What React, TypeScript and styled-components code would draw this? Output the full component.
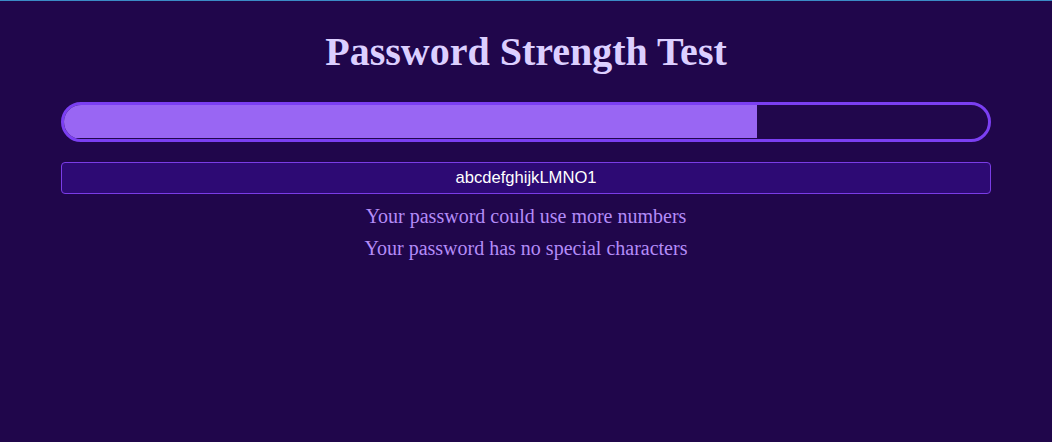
import React from "react";
import styled, { createGlobalStyle } from "styled-components";

const Global = createGlobalStyle`
  html, body { margin: 0; padding: 0; background: #20064b; }
  body { font-family: "Liberation Serif", "Times New Roman", serif; }
`;

const Page = styled.div`
  min-height: 442px;
  box-sizing: border-box;
  border-top: 1px solid #3b8bc6;
  background: #20064b;
  padding: 0 61px;
  display: flex;
  flex-direction: column;
  align-items: stretch;
`;

const Title = styled.h1`
  margin: 28px 0 0;
  text-align: center;
  font-family: "Liberation Serif", "Times New Roman", serif;
  font-weight: bold;
  font-size: 40px;
  line-height: 46px;
  color: #dccfff;
`;

const Track = styled.div`
  margin-top: 27px;
  height: 40px;
  box-sizing: border-box;
  border: 3px solid #7b3ff2;
  border-radius: 20px;
  overflow: hidden;
  background: #21074c;
`;

const Fill = styled.div`
  height: 33px;
  background: #9966f3;
`;

const Input = styled.input`
  margin-top: 20px;
  height: 32px;
  box-sizing: border-box;
  border: 1px solid #7a3ce6;
  border-radius: 4px;
  background: #2d0a74;
  color: #ffffff;
  text-align: center;
  font-family: "Liberation Sans", Arial, sans-serif;
  font-size: 16.6px;
  outline: none;
  padding: 0;
`;

const Message = styled.p`
  margin: 0;
  text-align: center;
  font-family: "Liberation Serif", "Times New Roman", serif;
  font-size: 20px;
  line-height: 32px;
  color: #b48cf8;
  &:first-of-type { margin-top: 6px; }
`;

export default function App() {
  const strength = 0.75;
  return (
    <>
      <Global />
      <Page>
        <Title>Password Strength Test</Title>
        <Track>
          <Fill style={{ width: `${strength * 100}%` }} />
        </Track>
        <Input defaultValue="abcdefghijkLMNO1" />
        <Message>Your password could use more numbers</Message>
        <Message>Your password has no special characters</Message>
      </Page>
    </>
  );
}
